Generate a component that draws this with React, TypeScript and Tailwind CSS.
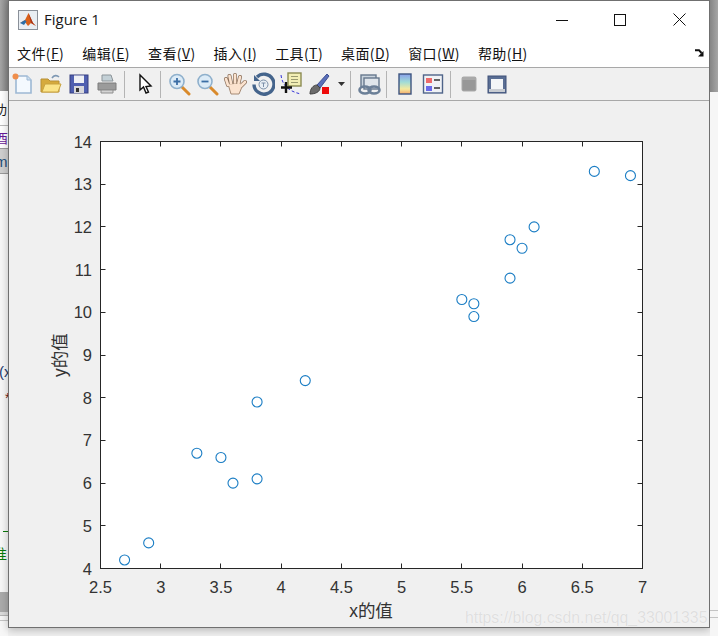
import React from "react";

const menus: [string, string][] = [
  ["文件", "F"],
  ["编辑", "E"],
  ["查看", "V"],
  ["插入", "I"],
  ["工具", "T"],
  ["桌面", "D"],
  ["窗口", "W"],
  ["帮助", "H"],
];

const pts: [number, number][] = [
  [2.7, 4.2], [2.9, 4.6], [3.3, 6.7], [3.5, 6.6], [3.6, 6.0], [3.8, 6.1], [3.8, 7.9], [4.2, 8.4],
  [5.5, 10.3], [5.6, 10.2], [5.6, 9.9], [5.9, 10.8], [5.9, 11.7], [6.0, 11.5], [6.1, 12.0], [6.6, 13.3], [6.9, 13.2],
];

const L = 100.5, R = 642.5, T = 141.5, B = 568.5;
const px = (v: number) => L + ((v - 2.5) / 4.5) * (R - L);
const py = (v: number) => B - ((v - 4) / 10) * (B - T);
const xt = [2.5, 3, 3.5, 4, 4.5, 5, 5.5, 6, 6.5, 7];
const yt = [4, 5, 6, 7, 8, 9, 10, 11, 12, 13, 14];

function Ico({ children, ml = "" }: { children: React.ReactNode; ml?: string }) {
  return (
    <div className={`w-[28px] h-full flex items-center justify-center shrink-0 ${ml}`}>
      <svg width="24" height="24" viewBox="0 0 24 24">{children}</svg>
    </div>
  );
}

function Sep({ ml }: { ml: string }) {
  return <div className={`w-px h-[27px] bg-[#b4b4b4] shrink-0 ${ml}`} />;
}

function Lens({ sign }: { sign: "+" | "-" }) {
  return (
    <>
      <path d="M15 15 L22 22" stroke="#d98a2b" strokeWidth="3" strokeLinecap="round" />
      <circle cx="10" cy="9.5" r="7" fill="#dcebf7" stroke="#8fb0cc" strokeWidth="1.6" />
      <path d={sign === "+" ? "M6.5 9.5h7M10 6v7" : "M6.5 9.5h7"} stroke="#3b6ea5" strokeWidth="1.8" />
    </>
  );
}

export default function App() {
  return (
    <div className="relative w-[718px] h-[636px] overflow-hidden bg-[#f1f1f1] flex font-['Liberation_Sans',sans-serif]">
      <div className="w-[8px] h-full shrink-0 flex flex-col overflow-hidden bg-[#f7f7f7] text-[13px] leading-none">
        <div className="h-[91px] shrink-0 bg-gradient-to-r from-[#a6a6a6] to-[#858585]" />
        <div className="h-[35px] shrink-0 bg-white flex items-center font-['Noto_Sans_CJK_SC',sans-serif] text-[#222] border-b border-[#bbb]">
          <span className="-ml-[6px] whitespace-nowrap">功</span>
        </div>
        <div className="h-[23px] shrink-0 bg-white flex items-center font-['Noto_Sans_CJK_SC',sans-serif] text-[#6a1b9a] border-b border-[#999]">
          <span className="-ml-[5px] whitespace-nowrap">酉</span>
        </div>
        <div className="h-[25px] shrink-0 bg-[#cfcfcf] flex items-center text-[#1f4e79] border-b border-[#999] text-[15px]">
          <span className="-ml-[5px]">m</span>
        </div>
        <div className="h-[205px] shrink-0 flex items-end text-[#1d3b6f] text-[15px]"><span className="-ml-px">(x</span></div>
        <div className="h-[26px] shrink-0 flex items-end text-[#702020] text-[14px]"><span className="ml-[5px]">*</span></div>
        <div className="h-[127px] shrink-0 flex items-end"><div className="w-full h-px bg-[#0a7a0a] ml-[3px]" /></div>
        <div className="h-[28px] shrink-0 flex items-end font-['Noto_Sans_CJK_SC',sans-serif] text-[#0a7a0a] text-[14px]"><span className="-ml-[7px] whitespace-nowrap">准</span></div>
        <div className="h-[32px] shrink-0" />
        <div className="h-[20px] shrink-0 bg-[#ababab]" />
        <div className="h-[3px] shrink-0 bg-[#dcdcdc]" />
        <div className="h-[1px] shrink-0 bg-[#b5b5b5]" />
        <div className="h-[4px] shrink-0" />
        <div className="h-[1px] shrink-0 bg-[#c4c4c4]" />
      </div>

      <div className="w-[702px] h-[628px] shrink-0 flex flex-col border border-[#707070] bg-[#f0f0f0] shadow-[0_2px_8px_rgba(0,0,0,0.25)]">
        <div className="h-[37px] bg-white flex items-center shrink-0">
          <svg className="ml-[9px]" width="20" height="20" viewBox="0 0 20 20">
            <rect x="0.5" y="0.5" width="19" height="19" fill="#e9eef3" stroke="#8a9099" />
            <path d="M2 13 L7 10 L10.5 3 L15 13 L18 16 L13 13 L10 16 L7 12 Z" fill="#d9601a" />
            <path d="M2 13 L7 10 L8.5 11.5 L6 15 Z" fill="#2c6ea8" />
            <path d="M10.5 3 L13 13 L18 16 L15 13 Z" fill="#a8341a" />
          </svg>
          <span className="ml-[6px] text-[15px] text-[#1a1a1a] font-['Open_Sans',sans-serif]">Figure 1</span>
          <div className="ml-auto flex items-center">
            <div className="w-[59px] flex justify-center">
              <svg width="12" height="12" viewBox="0 0 12 12"><path d="M0 6.5h12" stroke="#111" /></svg>
            </div>
            <div className="w-[59px] flex justify-center">
              <svg className="-ml-[2px]" width="12" height="12" viewBox="0 0 12 12"><rect x="0.5" y="0.5" width="11" height="11" fill="none" stroke="#111" /></svg>
            </div>
            <div className="w-[59px] flex justify-center">
              <svg width="13" height="13" viewBox="0 0 13 13"><path d="M0.5 0.5l12 12M12.5 0.5l-12 12" stroke="#111" /></svg>
            </div>
          </div>
        </div>

        <div className="h-[29px] bg-white flex items-center shrink-0 relative pl-[8px] gap-[18px] text-[14px] tracking-[0.4px] text-[#111] font-['Noto_Sans_CJK_SC',sans-serif] leading-none">
          {menus.map(([t, k]) => (
            <span key={k} className="whitespace-nowrap">
              {t}(<u>{k}</u>)
            </span>
          ))}
          <svg className="absolute right-[5px] top-[11px]" width="9" height="8" viewBox="0 0 9 8">
            <path d="M0 1.2 L4 1.2 L6.5 4" stroke="#111" strokeWidth="2" fill="none" />
            <path d="M3 7.5 L8.5 7.5 L8.5 2 Z" fill="#111" />
          </svg>
        </div>

        <div className="h-[34px] shrink-0 flex items-center bg-[#f0f0f0] border-y border-[#a8a8a8]">
          <Ico>
            <path d="M5 4h11l4 4v13H5z" fill="#f4f9fe" stroke="#9db8d4" strokeWidth="1.6" />
            <path d="M16 4v4h4" fill="#cfe0f0" stroke="#9db8d4" />
            <circle cx="4.5" cy="4.5" r="3" fill="#ef8d4a" />
          </Ico>
          <Ico>
            <path d="M2 7h7l2 2h9v11H2z" fill="#d6aa3c" stroke="#b78f35" />
            <path d="M3 20l3-8h16l-3 8z" fill="#fbe488" stroke="#c9a23e" />
            <path d="M13 6c2-3 5-3 7-1" fill="none" stroke="#7d97b3" strokeWidth="1.6" />
          </Ico>
          <Ico>
            <rect x="3" y="3" width="18" height="18" fill="#4f5fb0" stroke="#363f7f" />
            <rect x="7" y="3.5" width="10" height="7.5" fill="#eef0f5" />
            <rect x="7" y="14" width="10" height="7" fill="#d8d8dc" />
            <rect x="9" y="16" width="3" height="4" fill="#333" />
          </Ico>
          <Ico>
            <path d="M7 3h9l2 6H7z" fill="#c3d0d6" stroke="#8c9499" />
            <path d="M3 11h18v7H3z" fill="#9b9b9b" stroke="#7c7c7c" />
            <path d="M6 18h12v3H6z" fill="#d4d4d4" stroke="#8e8e8e" />
          </Ico>
          <Sep ml="ml-[3px]" />
          <Ico ml="ml-[6px]">
            <path d="M7 3 L7 18 L10.5 15 L13 21 L15.5 20 L13 14.5 L18 14 Z" fill="#fff" stroke="#111" strokeWidth="1.4" />
          </Ico>
          <Sep ml="ml-px" />
          <Ico ml="ml-[4px]"><Lens sign="+" /></Ico>
          <Ico><Lens sign="-" /></Ico>
          <Ico>
            <path d="M5 13 L3 7 M8 11 L6.5 4 M12 10.5 L12 3 M15.5 11 L17 5 M18 14 L22 10" stroke="#8a6f5a" strokeWidth="4" strokeLinecap="round" />
            <path d="M5 12 L18 11 L18.5 16 L16 22 L8 22 Z" fill="#fbe3cf" stroke="#a58a74" />
            <path d="M5 13 L3 7 M8 11 L6.5 4 M12 10.5 L12 3 M15.5 11 L17 5 M18 14 L22 10" stroke="#fbe3cf" strokeWidth="2.6" strokeLinecap="round" />
          </Ico>
          <Ico>
            <path d="M6 5 A10 10 0 1 1 3 12.5" fill="none" stroke="#44648c" strokeWidth="3.4" />
            <path d="M3 3v6h6z" fill="#44648c" />
            <circle cx="12.5" cy="12.5" r="4.5" fill="#e8eef4" stroke="#7b8fa8" />
            <path d="M10.5 11h4M12.5 11v4" stroke="#7b8fa8" />
          </Ico>
          <Ico>
            <path d="M2 3c1 9 6 16 20 19" fill="none" stroke="#3434d8" strokeDasharray="3 2" />
            <rect x="9" y="1" width="13" height="13" fill="#f2eeb5" stroke="#8b8a52" strokeWidth="1.4" />
            <path d="M12 4.5h7M12 7.5h7M12 10.5h7" stroke="#9a9a70" />
            <path d="M7 10v11M2 15.5h11" stroke="#111" strokeWidth="2.4" />
          </Ico>
          <Ico>
            <path d="M10 13 L20 2 L22 4 L13 16 Z" fill="#5a6fb8" stroke="#3d4f92" />
            <path d="M3 22c0-5 3-9 7-9l3 3c0 4-5 6-10 6z" fill="#6b6b6b" stroke="#444" />
            <rect x="15" y="15" width="7" height="7" fill="#ee0a0a" />
          </Ico>
          <svg className="ml-[5px] shrink-0" width="7" height="4" viewBox="0 0 7 4"><path d="M0 0h7L3.5 4z" fill="#333" /></svg>
          <Sep ml="ml-[5px]" />
          <Ico ml="ml-[4px]">
            <rect x="4" y="3" width="15" height="12" fill="#c9d3dd" stroke="#66788d" strokeWidth="1.4" />
            <rect x="7" y="6" width="15" height="11" fill="#dfe5eb" stroke="#66788d" strokeWidth="1.4" />
            <ellipse cx="8" cy="18" rx="5.5" ry="3.5" fill="none" stroke="#6b7f97" strokeWidth="2.6" />
            <ellipse cx="17" cy="18" rx="5.5" ry="3.5" fill="none" stroke="#6b7f97" strokeWidth="2.6" />
          </Ico>
          <Sep ml="ml-[3px]" />
          <Ico ml="ml-[4px]">
            <defs>
              <linearGradient id="cb" x1="0" y1="0" x2="0" y2="1">
                <stop offset="0" stopColor="#8aa0ea" />
                <stop offset="0.4" stopColor="#9fdcd8" />
                <stop offset="0.75" stopColor="#f5ea9e" />
                <stop offset="1" stopColor="#f3a86a" />
              </linearGradient>
            </defs>
            <rect x="6" y="2" width="12" height="20" fill="url(#cb)" stroke="#3e5580" strokeWidth="1.4" />
          </Ico>
          <Ico>
            <rect x="2.5" y="3" width="19" height="18" fill="#f0f2f5" stroke="#4f6489" strokeWidth="1.4" />
            <rect x="5" y="6" width="6" height="5" fill="#ee6a6a" />
            <rect x="5" y="14" width="6" height="5" fill="#6a6ae8" />
            <path d="M13 8h6M13 16h6" stroke="#333" strokeWidth="1.6" />
          </Ico>
          <Sep ml="ml-[3px]" />
          <Ico ml="ml-[4px]">
            <rect x="5" y="5" width="14" height="14" rx="1.5" fill="#979797" stroke="#aaa" />
            <rect x="5" y="5" width="14" height="3" fill="#a9a9a9" />
          </Ico>
          <Ico>
            <rect x="3" y="4" width="18" height="17" fill="#5a6e94" stroke="#3f5078" />
            <rect x="6" y="7" width="12" height="10" fill="#f3f5f7" />
            <rect x="4" y="17" width="16" height="3" fill="#c8ccd2" />
          </Ico>
        </div>

        <svg className="block flex-1" width="700" height="526" viewBox="9 101 700 526">
          <rect x={L} y={T} width={R - L} height={B - T} fill="#fff" stroke="#262626" />
          {xt.map((v) => (
            <g key={v}>
              {v > 2.5 && v < 7 && (
                <path d={`M${Math.floor(px(v)) + 0.5} ${B}v-5M${Math.floor(px(v)) + 0.5} ${T}v5`} stroke="#262626" />
              )}
              <text x={px(v)} y="593" textAnchor="middle" fontSize="16.5" fill="#333333" fontFamily="Liberation Sans">{v}</text>
            </g>
          ))}
          {yt.map((v) => (
            <g key={v}>
              {v > 4 && v < 14 && (
                <path d={`M${L} ${Math.floor(py(v)) + 0.5}h5M${R} ${Math.floor(py(v)) + 0.5}h-5`} stroke="#262626" />
              )}
              <text x="92" y={py(v) + 6} textAnchor="end" fontSize="16.5" fill="#333333" fontFamily="Liberation Sans">{v}</text>
            </g>
          ))}
          {pts.map(([x, y], i) => (
            <circle key={i} cx={px(x)} cy={py(y)} r="5" fill="none" stroke="#1a7dc4" strokeWidth="1.1" />
          ))}
          <text x="371" y="617" textAnchor="middle" fontSize="17.5" fill="#333333" fontFamily="Liberation Sans, Noto Sans CJK SC, sans-serif">x的值</text>
          <text transform="translate(66 355) rotate(-90)" textAnchor="middle" fontSize="17.5" fill="#333333" fontFamily="Liberation Sans, Noto Sans CJK SC, sans-serif">y的值</text>
        </svg>
      </div>

      <div className="flex-1 h-full flex flex-col overflow-hidden bg-[#f6f6f6]">
        <div className="h-[92px] bg-gradient-to-r from-[#858585] to-[#a6a6a6]" />
        <div className="h-[518px]" />
        <div className="h-px bg-[#c4c4c4]" />
        <div className="h-[6px]" />
        <div className="h-px bg-[#c4c4c4]" />
      </div>

      <div className="absolute left-[465px] top-[608px] text-[15.8px] leading-5 whitespace-nowrap text-[#dfdfdf] [text-shadow:0_0_1px_#ffffff] font-['Liberation_Sans',sans-serif]">
        https://blog.csdn.net/qq_33001335
      </div>
    </div>
  );
}
